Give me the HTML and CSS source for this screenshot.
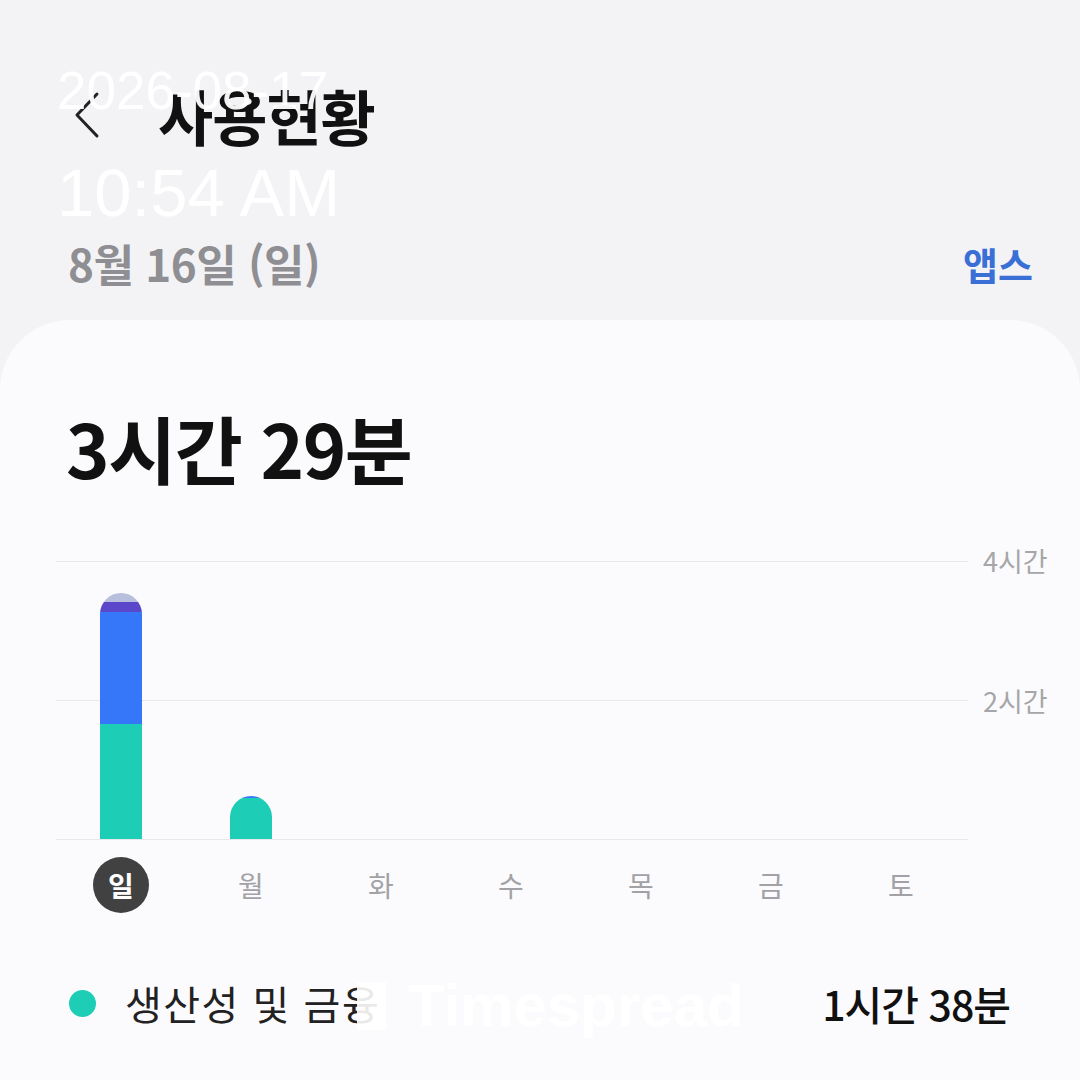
FILE: index.html
```html
<!DOCTYPE html>
<html lang="ko">
<head>
  <meta charset="UTF-8" />
  <title>사용현황</title>
  <link rel="stylesheet" href="styles.css">
</head>
<body>
  <div class="screen">
    <header class="topbar">
      <span class="back">
        <svg width="30" height="50" viewBox="0 0 30 50"><polyline points="25,4 5,25 25,46" fill="none" stroke="#222" stroke-width="3" stroke-linecap="round" stroke-linejoin="round"/></svg>
      </span>
      <h1 class="title">사용현황</h1>
    </header>

    <div class="date-row">
      <span class="date">8월 16일 (일)</span>
      <a class="apps">앱스</a>
    </div>

    <section class="card">
      <div class="total">3시간 29분</div>

      <div class="chart">
        <div class="plot">
          <div class="col">
            <div class="bar">
              <span class="seg cap" style="height:9px"></span>
              <span class="seg purple" style="height:10px"></span>
              <span class="seg blue" style="height:112px"></span>
              <span class="seg teal" style="height:115px"></span>
            </div>
          </div>
          <div class="col">
            <div class="bar">
              <span class="seg blue" style="height:2px"></span>
              <span class="seg teal" style="height:41px"></span>
            </div>
          </div>
          <div class="col"></div>
          <div class="col"></div>
          <div class="col"></div>
          <div class="col"></div>
          <div class="col"></div>
        </div>
        <div class="axis">
          <span>4시간</span>
          <span>2시간</span>
          <span></span>
        </div>
      </div>

      <div class="days">
        <span class="day today">일</span>
        <span class="day">월</span>
        <span class="day">화</span>
        <span class="day">수</span>
        <span class="day">목</span>
        <span class="day">금</span>
        <span class="day">토</span>
      </div>

      <div class="legend">
        <span class="dot"></span>
        <span class="cat">생산성 및 금융</span>
        <span class="time">1시간 38분</span>
      </div>
    </section>

    <!-- screenshot stamps over the page -->
    <div class="stamp stamp-date">2026-08-17</div>
    <div class="stamp stamp-time">10:54 AM</div>
    <div class="mark">
      <span class="mark-logo"></span>
      <span class="mark-text">Timespread</span>
    </div>
  </div>
</body>
</html>
```

FILE: styles.css
```css
body { margin: 0; background: #f3f3f6; font-family: "Noto Sans CJK KR", "Noto Sans", sans-serif; }
.screen { position: relative; width: 1080px; height: 1080px; overflow: hidden; }

.topbar { display: flex; align-items: center; padding: 80px 0 0 72px; height: 70px; }
.back { display: flex; width: 30px; height: 50px; margin-right: 56px; }
.title { margin: 0; font-size: 60px; line-height: 70px; font-weight: 700; color: #111; letter-spacing: -1px; }

.date-row { display: flex; justify-content: space-between; align-items: center; height: 50px; margin-top: 88px; padding: 0 47px 0 68px; }
.date { font-size: 44px; font-weight: 700; color: #8e8e93; letter-spacing: -0.5px; }
.apps { font-size: 38px; font-weight: 700; color: #3a6fd6; }

.card { margin-top: 32px; background: #fbfbfd; border-radius: 70px 70px 0 0; height: 760px; padding-top: 87px; box-sizing: border-box; }
.total { padding-left: 66px; font-size: 74px; line-height: 80px; font-weight: 700; color: #111; letter-spacing: -1.5px; }

.chart { display: flex; margin: 74px 0 0 56px; }
.plot { display: grid; grid-template-columns: repeat(7, 130px); align-items: end; width: 912px; height: 279px;
  background: repeating-linear-gradient(to bottom, #e8e8ec 0 1px, transparent 1px 139px); }
.col { display: flex; justify-content: center; align-items: flex-end; height: 100%; }
.bar { display: flex; flex-direction: column; width: 42px; border-radius: 21px 21px 0 0; overflow: hidden; margin-bottom: 1px; }
.seg { display: block; }
.cap { background: #b6c0dc; }
.purple { background: #5b47c9; }
.blue { background: #3676f8; }
.teal { background: #1ecdb6; }

.axis { display: flex; flex-direction: column; justify-content: space-between; height: 313px; margin: -17px 0 0 15px; }
.axis span { font-size: 27px; line-height: 34px; color: #a6a6aa; height: 34px; }

.days { display: grid; grid-template-columns: repeat(7, 130px); margin: 0 0 0 56px; height: 56px; }
.day { justify-self: center; width: 56px; height: 56px; line-height: 56px; text-align: center; font-size: 28px; color: #a2a2a6; }
.today { background: #414141; color: #fff; border-radius: 50%; font-weight: 700; }

.legend { display: flex; align-items: center; height: 50px; margin-top: 65px; padding: 0 70px 0 69px; }
.dot { width: 27px; height: 27px; border-radius: 50%; background: #1ecdb6; margin-right: 29px; }
.cat { flex: 1; font-size: 40px; color: #222; letter-spacing: 1.5px; }
.time { font-size: 41px; font-weight: 500; color: #111; letter-spacing: -1px; }

.stamp { position: absolute; left: 57px; color: rgba(255, 255, 255, 0.95); font-family: "Liberation Sans", Arial, sans-serif; }
.stamp-date { top: 60px; font-size: 53px; }
.stamp-time { top: 154px; font-size: 67px; }

.mark { position: absolute; left: 357px; top: 976px; display: flex; align-items: center; }
.mark-logo { width: 29px; height: 48px; background: rgba(255, 255, 255, 0.9); margin-right: 22px; }
.mark-text { font-family: "Liberation Sans", Arial, sans-serif; font-size: 60px; font-weight: 700; color: #fff; line-height: 60px; }
```
